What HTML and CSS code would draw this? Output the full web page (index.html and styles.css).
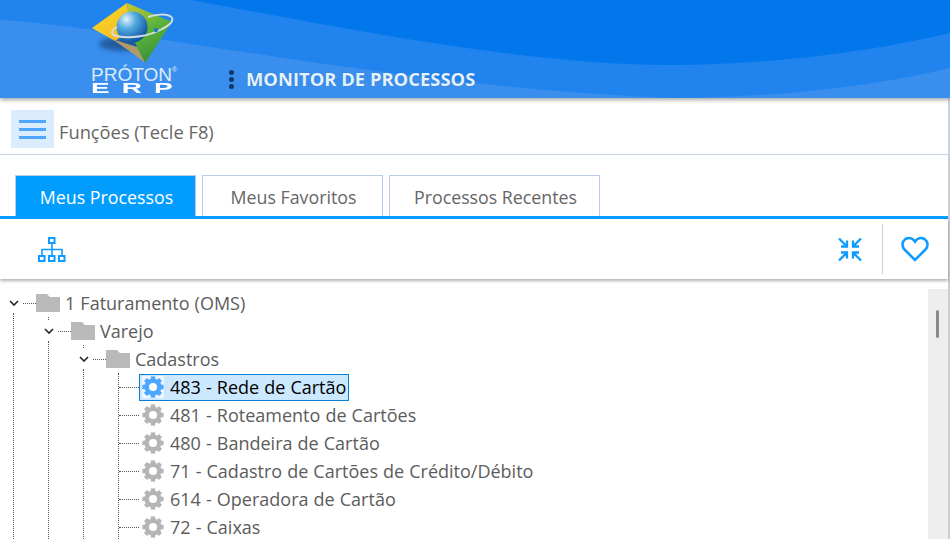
FILE: index.html
```html
<!DOCTYPE html>
<html lang="pt-BR">
<head>
    <meta charset="UTF-8">
    <title>Monitor de Processos</title>
    <link rel="stylesheet" href="styles.css">
</head>
<body>
    <svg class="defs" width="0" height="0">
        <symbol id="gear" viewBox="0 0 22 22">
            <g fill="currentColor">
                <rect x="8.8" y="0.4" width="4.4" height="21.2"/>
                <rect x="8.8" y="0.4" width="4.4" height="21.2" transform="rotate(45 11 11)"/>
                <rect x="8.8" y="0.4" width="4.4" height="21.2" transform="rotate(90 11 11)"/>
                <rect x="8.8" y="0.4" width="4.4" height="21.2" transform="rotate(135 11 11)"/>
            </g>
            <circle cx="11" cy="11" r="6.3" fill="none" stroke="currentColor" stroke-width="4.6"/>
            <circle cx="11" cy="11" r="4" fill="#fff"/>
        </symbol>
        <symbol id="folder" viewBox="0 0 24 18">
            <path d="M0 0H11L14 3H24V18H0Z" fill="#b9b9b9"/>
        </symbol>
        <symbol id="chevron" viewBox="0 0 10 6">
            <path d="M1 1L5 5L9 1" fill="none" stroke="#222" stroke-width="1.6"/>
        </symbol>
    </svg>

    <header class="app-header">
        <svg class="waves" viewBox="0 0 950 98" preserveAspectRatio="none">
            <path d="M0 20C130 27 400 88 670 98C780 98 880 85 950 68V0H0Z" fill="#2184ee"/>
            <path d="M190 0C330 25 520 65 670 65C770 65 870 52 950 33V0Z" fill="#0277eb"/>
        </svg>
        <div class="logo">
            <svg class="logo-mark" viewBox="0 0 90 66">
                <defs>
                    <radialGradient id="globe" cx="32%" cy="25%" r="80%">
                        <stop offset="0" stop-color="#e4f3fb"/>
                        <stop offset="0.4" stop-color="#4fa8e0"/>
                        <stop offset="1" stop-color="#0b4f9c"/>
                    </radialGradient>
                    <linearGradient id="green" x1="0.3" y1="0" x2="0.7" y2="1">
                        <stop offset="0" stop-color="#b9c42e"/>
                        <stop offset="0.4" stop-color="#5fb43c"/>
                        <stop offset="1" stop-color="#2f8f32"/>
                    </linearGradient>
                    <linearGradient id="yellow" x1="0" y1="0" x2="1" y2="1">
                        <stop offset="0" stop-color="#ffd92a"/>
                        <stop offset="1" stop-color="#eeb91e"/>
                    </linearGradient>
                    <filter id="soft" x="-30%" y="-60%" width="160%" height="220%">
                        <feGaussianBlur stdDeviation="2.5"/>
                    </filter>
                </defs>
                <ellipse cx="34" cy="44" rx="25" ry="7" fill="#17457f" opacity="0.7" filter="url(#soft)"/>
                <path d="M37 3L2 28L25 41L40 30Z" fill="url(#yellow)"/>
                <path d="M37 3L82 22L55 63L47 47L40 30Z" fill="url(#green)"/>
                <path d="M22 39L47 47L55 63L45 55Z" fill="#b19a66"/>
                <circle cx="42" cy="27" r="15.5" fill="url(#globe)"/>
                <path d="M27 27C20 31 21 35 27 36C40 39 60 36 72 29C82 24 85 19 80 16C76 14 66 14 58 17" fill="none" stroke="#d5dde2" stroke-width="2"/>
                <circle cx="66" cy="30" r="2.2" fill="#1e7fc4"/>
            </svg>
            <div class="logo-name">PRÓTON<sup>®</sup></div>
            <div class="logo-sub">ERP</div>
        </div>
        <span class="kebab"><i></i><i></i><i></i></span>
        <h1 class="app-title">MONITOR DE PROCESSOS</h1>
    </header>

    <div class="func-bar">
        <button class="menu-btn"><span></span><span></span><span></span></button>
        <span class="func-label">Funções (Tecle F8)</span>
    </div>

    <main class="panel">
        <nav class="tabs">
            <a class="tab active">Meus Processos</a>
            <a class="tab fav">Meus Favoritos</a>
            <a class="tab recent">Processos Recentes</a>
        </nav>

        <div class="actions">
            <svg class="org-icon" viewBox="0 0 28 25" fill="none" stroke="#0f9bff" stroke-width="2">
                <rect x="11" y="1" width="5.500" height="5"/>
                <rect x="1" y="19" width="5.500" height="5"/>
                <rect x="11" y="19" width="5.500" height="5"/>
                <rect x="21" y="19" width="5.500" height="5"/>
                <path d="M14 7V19M4 19V12.500H24V19" stroke-width="1.6"/>
            </svg>
            <div class="actions-right">
                <svg class="shrink-icon" viewBox="0 0 24 25" fill="none" stroke="#0f9bff" stroke-width="2.300">
                    <path d="M1 1.500L8.500 9M3 9.500H9V3.500M23 1.500L15.500 9M21 9.500H15V3.500M1 23.500L8.500 16M3 15.500H9V21.500M23 23.500L15.500 16M21 15.500H15V21.500"/>
                </svg>
                <span class="divider"></span>
                <svg class="heart-icon" viewBox="0 0 28 26" fill="none" stroke="#0f9bff" stroke-width="2.600">
                    <path d="M14 24L3.500 13.500C0.500 10.300 1 5.500 4.500 3C8 1 11.800 2 14 5.500C16.200 2 20 1 23.500 3C27 5.500 27.500 10.300 24.500 13.500Z"/>
                </svg>
            </div>
        </div>

        <div class="tree-area">
            <ul class="tree root">
                <li>
                    <div class="row">
                        <span class="toggle"><svg><use href="#chevron"/></svg></span>
                        <span class="dots"></span>
                        <svg class="folder"><use href="#folder"/></svg>
                        <span class="label">1 Faturamento (OMS)</span>
                    </div>
                    <ul class="tree sub">
                        <li>
                            <div class="row">
                                <span class="toggle stub"><svg><use href="#chevron"/></svg></span>
                                <span class="dots"></span>
                                <svg class="folder"><use href="#folder"/></svg>
                                <span class="label">Varejo</span>
                            </div>
                            <ul class="tree sub">
                                <li>
                                    <div class="row">
                                        <span class="toggle stub"><svg><use href="#chevron"/></svg></span>
                                        <span class="dots"></span>
                                        <svg class="folder"><use href="#folder"/></svg>
                                        <span class="label">Cadastros</span>
                                    </div>
                                    <div class="tree sub">
                                        <ul class="tree leaves">
                                            <li class="leaf selected"><span class="dots"></span><span class="leaf-box"><svg class="gear"><use href="#gear"/></svg><span class="label">483 - Rede de Cartão</span></span></li>
                                            <li class="leaf"><span class="dots"></span><span class="leaf-box"><svg class="gear"><use href="#gear"/></svg><span class="label">481 - Roteamento de Cartões</span></span></li>
                                            <li class="leaf"><span class="dots"></span><span class="leaf-box"><svg class="gear"><use href="#gear"/></svg><span class="label">480 - Bandeira de Cartão</span></span></li>
                                            <li class="leaf"><span class="dots"></span><span class="leaf-box"><svg class="gear"><use href="#gear"/></svg><span class="label">71 - Cadastro de Cartões de Crédito/Débito</span></span></li>
                                            <li class="leaf"><span class="dots"></span><span class="leaf-box"><svg class="gear"><use href="#gear"/></svg><span class="label">614 - Operadora de Cartão</span></span></li>
                                            <li class="leaf"><span class="dots"></span><span class="leaf-box"><svg class="gear"><use href="#gear"/></svg><span class="label">72 - Caixas</span></span></li>
                                        </ul>
                                    </div>
                                </li>
                            </ul>
                        </li>
                    </ul>
                </li>
            </ul>
            <div class="scroll-track"><div class="scroll-thumb"></div></div>
        </div>
    </main>
</body>
</html>
```

FILE: styles.css
```css
* {
    box-sizing: border-box;
}

html,
body {
    height: 539px;
    overflow: hidden;
}

body {
    margin: 0;
    background: #fff;
    font-family: "Open Sans", "Noto Sans", sans-serif;
    color: #5c5c5c;
}

.defs {
    display: block;
    height: 0;
}

/* header */
.app-header {
    position: relative;
    z-index: 2;
    display: flex;
    align-items: flex-end;
    height: 98px;
    padding-left: 90px;
    background: #3a8fee;
    box-shadow: 0 2px 4px rgba(0,0,0,0.35);
}

.waves {
    position: absolute;
    left: 0;
    top: 0;
    width: 100%;
    height: 100%;
}

.logo {
    position: relative;
    width: 90px;
    height: 98px;
    color: #fff;
}

.logo-mark {
    display: block;
    width: 90px;
    height: 66px;
}

.logo-name {
    margin-left: 1px;
    font-family: "Liberation Sans", sans-serif;
    font-size: 19px;
    line-height: 17px;
    color: #dcebfb;
    white-space: nowrap;
}

.logo-name sup {
    font-size: 7px;
    line-height: 0;
    vertical-align: 9px;
}

.logo-sub {
    width: 42px;
    margin-left: 1px;
    font-family: "Liberation Sans", sans-serif;
    font-size: 14px;
    font-weight: bold;
    line-height: 11px;
    letter-spacing: 6px;
    transform: scaleX(2);
    transform-origin: left;
}

.kebab {
    position: relative;
    display: flex;
    flex-direction: column;
    gap: 2px;
    margin: 0 0 9px 49px;
}

.kebab i {
    display: block;
    width: 5px;
    height: 5px;
    border-radius: 50%;
    background: #12386b;
}

.app-title {
    position: relative;
    margin: 0 0 7px 12px;
    font-size: 18.4px;
    font-weight: 700;
    line-height: 24px;
    color: #e3f2ff;
    text-shadow: 0 0 1px rgba(0,40,100,0.4);
    white-space: nowrap;
}

/* funcoes */
.func-bar {
    display: flex;
    align-items: center;
    height: 57px;
    padding: 6px 0 0 11px;
    border-bottom: 1px solid #c5d3e6;
    border-right: 2px solid #c5d3e6;
}

.menu-btn {
    display: flex;
    flex-direction: column;
    align-items: center;
    justify-content: center;
    gap: 5px;
    width: 43px;
    height: 38px;
    padding: 0;
    border: 0;
    background: #dcecff;
}

.menu-btn span {
    display: block;
    width: 27px;
    height: 3px;
    background: #4da6ff;
}

.func-label {
    margin: 4px 0 0 5px;
    font-size: 18.3px;
    color: #666;
}

/* abas */
.panel {
    border-right: 2px solid #c9ced6;
    height: 385px;
}

.tabs {
    display: flex;
    gap: 6px;
    height: 64px;
    padding: 20px 0 0 15px;
    border-bottom: 3px solid #009dff;
}

.tab {
    display: flex;
    align-items: center;
    justify-content: center;
    width: 181px;
    height: 41px;
    padding: 1px 0 0 2px;
    border: 1px solid #b9cde8;
    border-bottom: 0;
    font-size: 17.8px;
    color: #666;
}

.tab.active {
    background: #009dff;
    color: #fff;
}

.tab.recent {
    width: 211px;
}

.actions {
    position: relative;
    z-index: 1;
    display: flex;
    align-items: center;
    justify-content: space-between;
    height: 60px;
    padding-left: 38px;
    box-shadow: 0 2px 3px rgba(0,0,0,0.3);
}

.org-icon {
    width: 28px;
    height: 25px;
}

.actions-right {
    display: flex;
    align-items: center;
}

.shrink-icon {
    width: 24px;
    height: 25px;
}

.divider {
    width: 1px;
    height: 50px;
    margin: 0 18px 0 20px;
    background: #c9d2dc;
}

.heart-icon {
    width: 28px;
    height: 26px;
    margin-right: 19px;
}

/* arvore */
.tree-area {
    display: flex;
    height: 260px;
    padding-top: 10px;
    overflow: hidden;
}

.tree {
    margin: 0;
    padding: 0;
    list-style: none;
}

.tree.root {
    flex: 1;
    min-width: 0;
    margin-left: -21px;
}

.tree.sub {
    margin: -4px 0 0 34px;
    padding-top: 4px;
    border-left: 1px dotted #555;
}

.tree.leaves {
    margin-left: 34px;
    border-left: 1px dotted #555;
}

.row {
    display: flex;
    align-items: center;
    height: 28px;
    padding-left: 28px;
}

.toggle {
    position: relative;
    display: flex;
    align-items: center;
    justify-content: center;
    width: 13px;
    height: 28px;
}

.toggle svg {
    width: 10px;
    height: 6px;
}

.toggle.stub::before {
    content: "";
    position: absolute;
    left: 6px;
    top: 0;
    height: 3px;
    border-left: 1px dotted #555;
}

.dots {
    flex: none;
    width: 13px;
    height: 0;
    margin-left: 3px;
    border-top: 1px dotted #555;
}

.folder {
    width: 24px;
    height: 18px;
    margin-right: 5px;
}

.label {
    font-size: 18px;
    line-height: 26px;
    word-spacing: 0.4px;
    white-space: nowrap;
}

.leaf {
    display: flex;
    align-items: center;
    height: 28px;
}

.leaf .dots {
    width: 20px;
    margin-left: 0;
}

.leaf-box {
    display: flex;
    align-items: center;
    height: 27px;
    padding-right: 2px;
    border: 1px solid transparent;
}

.gear {
    width: 22px;
    height: 22px;
    margin: 0 6px 0 2px;
    color: #b5b5b5;
}

.selected .leaf-box {
    background: #cce8ff;
    border-color: #0a7fd1;
}

.selected .gear {
    color: #4da6ff;
    background: #eef6ff;
}

.selected .label {
    color: #000;
}

.scroll-track {
    flex: none;
    width: 20px;
    background: #eee;
}

.scroll-thumb {
    width: 3px;
    height: 28px;
    margin: 21px 0 0 8px;
    border-radius: 2px;
    background: #8a8a8a;
}
```
